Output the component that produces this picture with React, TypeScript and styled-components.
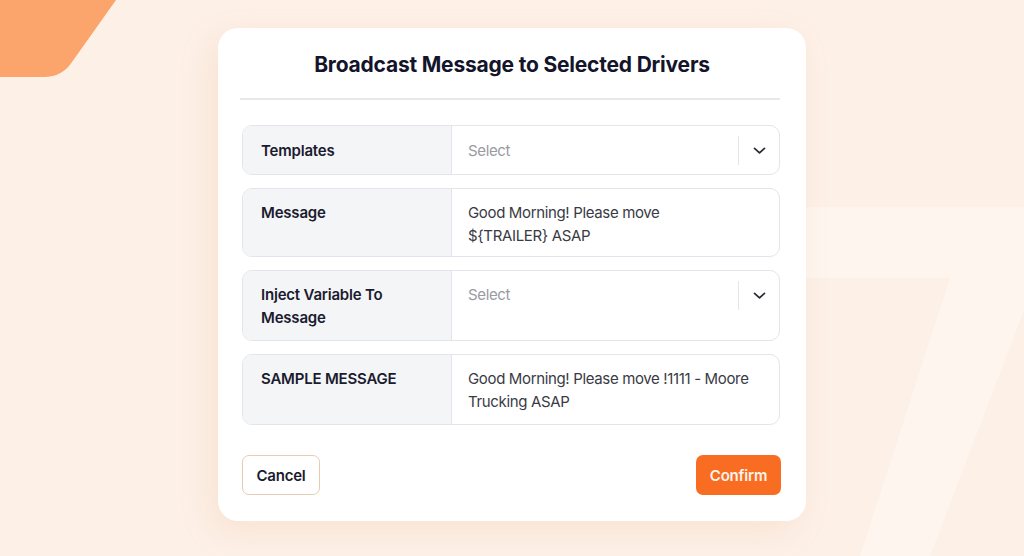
import React from "react";
import styled, { createGlobalStyle } from "styled-components";

const Global = createGlobalStyle`
  html, body { margin: 0; padding: 0; }
  body {
    width: 1024px;
    height: 556px;
    overflow: hidden;
    background: #fdf0e7;
    font-family: Inter, "Open Sans", sans-serif;
  }
  * { box-sizing: border-box; }
`;

const Page = styled.div`
  position: relative;
  width: 1024px;
  height: 556px;
  display: flex;
  justify-content: center;
  align-items: flex-start;
  padding-top: 28px;
  overflow: hidden;
  background: #fdf0e7;
`;

const Decor = styled.svg`
  position: absolute;
  left: 0;
  top: 0;
  pointer-events: none;
`;

const Card = styled.div`
  position: relative;
  z-index: 1;
  width: 588px;
  height: 493px;
  background: #ffffff;
  border-radius: 20px;
  box-shadow: -8px 10px 30px rgba(230, 170, 130, 0.18);
  padding: 0 26px 0 22px;
  display: flex;
  flex-direction: column;
`;

const Title = styled.h1`
  margin: 0;
  height: 72px;
  display: flex;
  align-items: center;
  justify-content: center;
  padding-top: 2px;
  padding-left: 4px;
  font-size: 21px;
  font-weight: 700;
  color: #14142b;
  letter-spacing: -0.2px;
  border-bottom: 2px solid #e8e8ec;
`;

const Rows = styled.div`
  display: flex;
  flex-direction: column;
  gap: 13px;
  margin-top: 25px;
  padding-left: 2px;
`;

const Row = styled.div<{ $h: number }>`
  display: grid;
  grid-template-columns: 209px 1fr;
  height: ${(p) => p.$h}px;
  border: 1px solid #e3e5ea;
  border-radius: 10px;
  overflow: hidden;
`;

const Label = styled.div<{ $center?: boolean }>`
  background: #f4f5f7;
  border-right: 1px solid #e3e5ea;
  padding: ${(p) => (p.$center ? "0 18px" : "12px 18px 0")};
  display: flex;
  align-items: ${(p) => (p.$center ? "center" : "flex-start")};
  font-size: 15px;
  font-weight: 600;
  line-height: 23px;
  color: #1b1b2f;
  letter-spacing: -0.2px;
`;

const Value = styled.div<{ $center?: boolean }>`
  display: flex;
  align-items: ${(p) => (p.$center ? "center" : "flex-start")};
  padding: ${(p) => (p.$center ? "0 0 0 16px" : "12px 0 0 16px")};
  font-size: 15px;
  line-height: 23px;
  color: #3a3a44;
  letter-spacing: -0.35px;
`;

const ValueText = styled.div`
  flex: 1;
  padding-right: 20px;
`;

const Placeholder = styled.span`
  flex: 1;
  color: #9a9aa2;
`;

const Indicator = styled.div<{ $shift?: number }>`
  width: 41px;
  height: 29px;
  margin-top: ${(p) => p.$shift ?? 0}px;
  border-left: 1px solid #e3e5ea;
  display: flex;
  align-items: center;
  justify-content: center;
  color: #2a2a33;
`;

const Footer = styled.div`
  display: flex;
  justify-content: space-between;
  margin-top: 30px;
  padding-left: 2px;
`;

const CancelButton = styled.button`
  height: 40px;
  width: 78px;
  border: 1px solid #e8cdb5;
  background: #fff;
  border-radius: 7px;
  font-family: inherit;
  font-size: 15px;
  font-weight: 600;
  color: #1b1b2f;
  letter-spacing: -0.2px;
`;

const ConfirmButton = styled.button`
  height: 40px;
  width: 85px;
  border: none;
  background: #f86d22;
  border-radius: 7px;
  font-family: inherit;
  font-size: 15px;
  font-weight: 600;
  color: #fff3ea;
  letter-spacing: -0.2px;
  margin-right: -1px;
`;

const Chevron = () => (
  <svg width="17" height="17" viewBox="0 0 24 24" fill="none" stroke="currentColor" strokeWidth="2.4" strokeLinecap="round" strokeLinejoin="round">
    <path d="M5 9l7 6.5 7-6.5" />
  </svg>
);

export default function App() {
  return (
    <>
      <Global />
      <Page>
        <Decor width="1024" height="556" viewBox="0 0 1024 556">
          <path d="M0 0 L116 0 L72 62 Q62 77 44 77 L0 77 Z" fill="#fba46c" />
          <path
            d="M806 207 L1024 207 L1024 310 L930 556 L860 556 L950 278 L806 278 Z"
            fill="#fef5ef"
          />
        </Decor>
        <Card>
          <Title>Broadcast Message to Selected Drivers</Title>
          <Rows>
            <Row $h={50}>
              <Label $center>Templates</Label>
              <Value $center>
                <Placeholder>Select</Placeholder>
                <Indicator>
                  <Chevron />
                </Indicator>
              </Value>
            </Row>
            <Row $h={69}>
              <Label>Message</Label>
              <Value>
                <ValueText>
                  Good Morning! Please move
                  <br />
                  {"${TRAILER}"} ASAP
                </ValueText>
              </Value>
            </Row>
            <Row $h={71}>
              <Label>
                Inject Variable To
                <br />
                Message
              </Label>
              <Value>
                <Placeholder>Select</Placeholder>
                <Indicator $shift={-2}>
                  <Chevron />
                </Indicator>
              </Value>
            </Row>
            <Row $h={71}>
              <Label>SAMPLE MESSAGE</Label>
              <Value>
                <ValueText>
                  Good Morning! Please move !1111 - Moore
                  <br />
                  Trucking ASAP
                </ValueText>
              </Value>
            </Row>
          </Rows>
          <Footer>
            <CancelButton>Cancel</CancelButton>
            <ConfirmButton>Confirm</ConfirmButton>
          </Footer>
        </Card>
      </Page>
    </>
  );
}
